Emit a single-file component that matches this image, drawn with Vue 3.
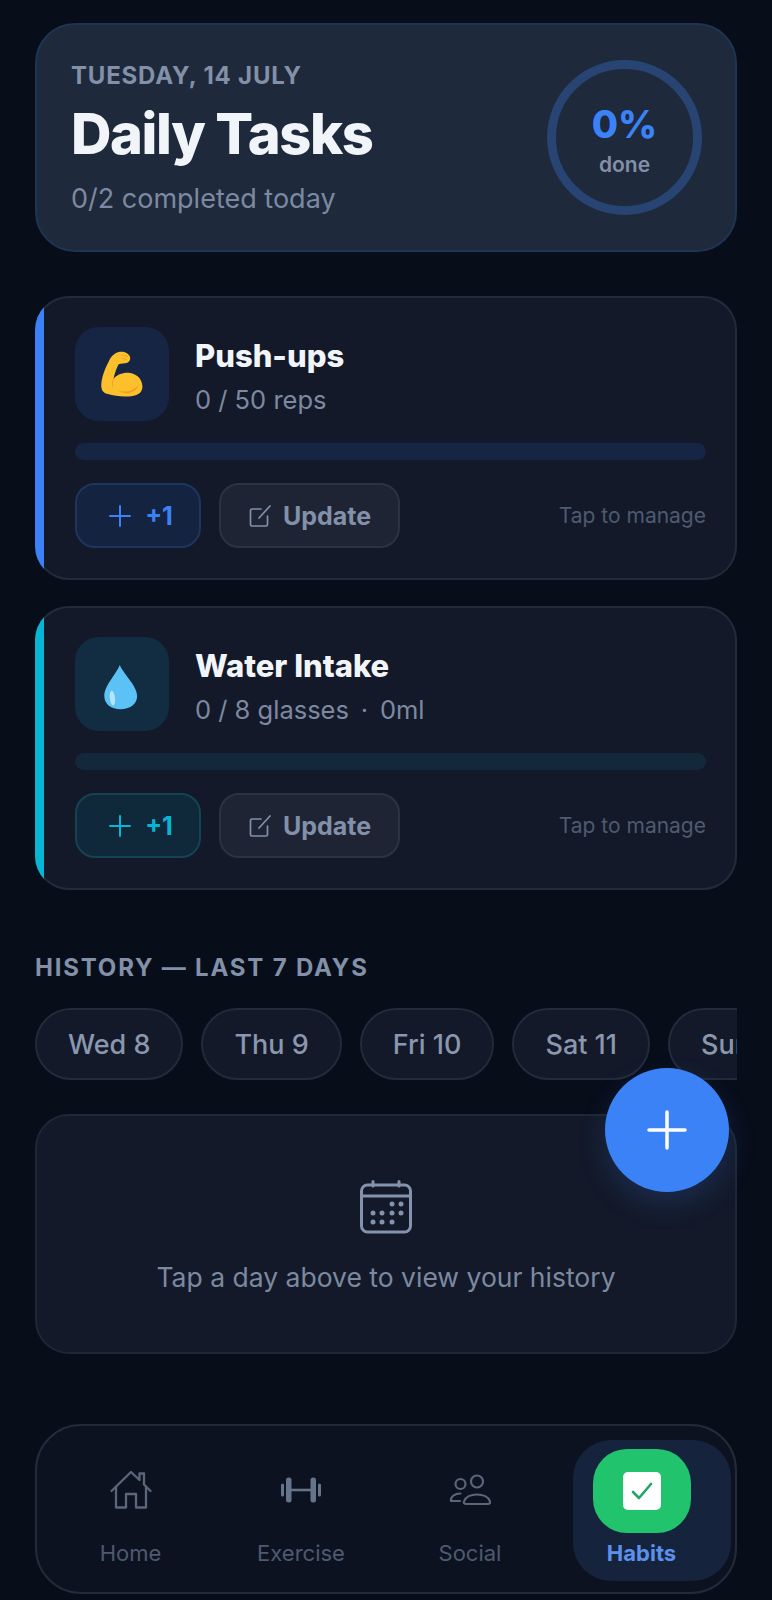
<template>
  <div class="page">
    <section class="summary">
      <div>
        <div class="date">TUESDAY, 14 JULY</div>
        <h1>Daily Tasks</h1>
        <div class="summary-sub">0/2 completed today</div>
      </div>
      <div class="ring">
        <span class="ring-pct">0%</span>
        <span class="ring-done">done</span>
      </div>
    </section>

    <section v-for="task in tasks" :key="task.id" class="task" :class="task.id">
      <div class="task-top">
        <div class="task-icon">
          <svg v-if="task.id === 'pushups'" width="59" height="65" viewBox="0 0 168 186">
            <path d="M25 136C19 118 30 82 45 55C52 40 63 30 76 28C88 26 101 31 105 41C108 50 104 58 96 60C90 62 80 61 73 64C67 74 62 90 58 106C68 93 84 87 102 88C124 90 141 106 141 128C141 147 124 155 100 156C80 157 58 154 42 149C34 147 28 143 25 136z" fill="#fcc02c"/>
            <path d="M70 138C88 146 116 142 128 124C131 118 132 112 130 106C134 124 124 142 104 146C92 148 80 144 70 138z" fill="#f0a020"/>
            <path d="M58 106C55 114 54 122 56 128" fill="none" stroke="#f0a020" stroke-width="2.500" stroke-linecap="round"/>
            <path d="M84 37L98 42M84 47L95 50" fill="none" stroke="#f0a020" stroke-width="2.500" stroke-linecap="round"/>
          </svg>
          <svg v-else width="62" height="69" viewBox="0 0 168 186">
            <path d="M78 40C86 62 125 96 125 124C125 146 105 160 80 160C55 160 36 146 36 124C36 96 70 62 78 40z" fill="#5cc1f5"/>
            <ellipse cx="58" cy="130" rx="7" ry="20" fill="#b5e4fb" transform="rotate(-6 58 130)"/>
          </svg>
        </div>
        <div class="task-text">
          <div class="task-name">{{ task.name }}</div>
          <div class="task-sub">{{ task.sub }}</div>
        </div>
      </div>
      <div class="track"></div>
      <div class="task-actions">
        <button class="btn-add">
          <svg width="26" height="26" viewBox="0 0 26 26" fill="none" stroke="currentColor" stroke-width="2" stroke-linecap="round">
            <path d="M13 3v20M3 13h20"/>
          </svg>
          <span>+1</span>
        </button>
        <button class="btn-update">
          <svg width="24" height="24" viewBox="0 0 24 24" fill="none" stroke="currentColor" stroke-width="1.700" stroke-linecap="round" stroke-linejoin="round">
            <path d="M13 5H4a1.500 1.500 0 0 0-1.500 1.500v14A1.500 1.500 0 0 0 4 22h14a1.500 1.500 0 0 0 1.500-1.500V12"/>
            <path d="M11 14L22 2"/>
          </svg>
          <span>Update</span>
        </button>
        <span class="manage">Tap to manage</span>
      </div>
    </section>

    <h2 class="history-title">HISTORY — LAST 7 DAYS</h2>
    <div class="days">
      <button v-for="day in days" :key="day" class="day">{{ day }}</button>
    </div>

    <section class="history-empty">
      <svg width="54" height="54" viewBox="0 0 54 54" fill="none" stroke="#8492ad" stroke-width="3" stroke-linecap="round">
        <rect x="2.500" y="5" width="49" height="47" rx="6"/>
        <path d="M2.500 16h49M14 1.500V6M40 1.500V6"/>
        <g fill="#8492ad" stroke="none">
          <circle cx="33" cy="24" r="2.500"/><circle cx="42" cy="24" r="2.500"/>
          <circle cx="14" cy="33" r="2.500"/><circle cx="23" cy="33" r="2.500"/><circle cx="33" cy="33" r="2.500"/><circle cx="42" cy="33" r="2.500"/>
          <circle cx="14" cy="42" r="2.500"/><circle cx="23" cy="42" r="2.500"/><circle cx="33" cy="42" r="2.500"/>
        </g>
      </svg>
      <p>Tap a day above to view your history</p>
    </section>

    <button class="fab">
      <svg width="40" height="40" viewBox="0 0 40 40" fill="none" stroke="#fff" stroke-width="3.500" stroke-linecap="round">
        <path d="M20 2v36M2 20h36"/>
      </svg>
    </button>

    <nav class="nav">
      <div class="nav-item">
        <svg width="42" height="38" viewBox="0 0 42 38" fill="none" stroke="#5b6679" stroke-width="2.300" stroke-linejoin="round" stroke-linecap="round">
          <path d="M1.500 20L21 1l8.500 8V2.500h4.500v11L40.500 20"/>
          <path d="M6 16v20.500h10V23h10v13.500h10V16"/>
        </svg>
        <span>Home</span>
      </div>
      <div class="nav-item">
        <svg width="42" height="38" viewBox="0 0 42 38" fill="#64748b">
          <rect x="1" y="12.500" width="3" height="13" rx="1.500"/>
          <rect x="6" y="6.500" width="5.500" height="25" rx="2.500"/>
          <rect x="30.500" y="6.500" width="5.500" height="25" rx="2.500"/>
          <rect x="38" y="12.500" width="3" height="13" rx="1.500"/>
          <rect x="11" y="17.700" width="20" height="2.600"/>
        </svg>
        <span>Exercise</span>
      </div>
      <div class="nav-item">
        <svg width="42" height="38" viewBox="0 0 42 38" fill="none" stroke="#5b6679" stroke-width="2.200" stroke-linecap="round">
          <circle cx="11.500" cy="13" r="5"/>
          <circle cx="28" cy="10.500" r="6"/>
          <path d="M2 30h9M2 30c-.8-4 3.500-7.500 9.500-7.500"/>
          <path d="M17 33c-1.500 0-2.500-1-2-2.500c1.500-4.500 7-7 13-7s11.500 2.500 13 7c.4 1.500-.5 2.500-2 2.500z"/>
        </svg>
        <span>Social</span>
      </div>
      <div class="nav-item active">
        <div class="nav-badge">
          <div class="nav-check">
            <svg width="22" height="18" viewBox="0 0 22 18" fill="none" stroke="#22a565" stroke-width="2.600" stroke-linecap="round" stroke-linejoin="round">
              <path d="M2 10l6 6L20 2"/>
            </svg>
          </div>
        </div>
        <span>Habits</span>
      </div>
    </nav>
  </div>
</template>

<script setup>
const tasks = [
  { id: 'pushups', name: 'Push-ups', sub: '0 / 50 reps' },
  { id: 'water', name: 'Water Intake', sub: '0 / 8 glasses\u2009 ·\u2009 0ml' }
]

const days = ['Wed 8', 'Thu 9', 'Fri 10', 'Sat 11', 'Sun 12']
</script>

<style>
html, body {
  margin: 0;
  background: #080d1a;
}
</style>

<style scoped>
.page {
  position: relative;
  box-sizing: border-box;
  height: 1600px;
  padding: 23px 35px 0;
  overflow: hidden;
  background: #080d1a;
  font-family: Inter, "Liberation Sans", sans-serif;
}

.summary {
  box-sizing: border-box;
  height: 229px;
  display: flex;
  justify-content: space-between;
  align-items: center;
  padding: 0 35px 0 34px;
  background: #1e293b;
  border: 2px solid #1e3454;
  border-radius: 40px;
}

.date {
  font-size: 24px;
  line-height: 29px;
  font-weight: 700;
  letter-spacing: 0.8px;
  color: #8290a8;
}

h1 {
  margin: 10px 0 14px;
  font-size: 56px;
  line-height: 68px;
  font-weight: 800;
  letter-spacing: -1.4px;
  color: #f1f5f9;
}

.summary-sub {
  font-size: 27px;
  line-height: 33px;
  color: #7c89a1;
}

.ring {
  box-sizing: border-box;
  width: 155px;
  height: 155px;
  margin-right: -2px;
  padding-top: 4px;
  display: flex;
  flex-direction: column;
  align-items: center;
  justify-content: center;
  border: 9px solid #274472;
  border-radius: 50%;
}

.ring-pct {
  font-size: 38px;
  line-height: 44px;
  font-weight: 800;
  color: #3b82f6;
}

.ring-done {
  margin-top: 6px;
  font-size: 21px;
  font-weight: 600;
  color: #8290a8;
}

.task {
  position: relative;
  box-sizing: border-box;
  height: 284px;
  margin-top: 26px;
  padding: 31px 31px 0 40px;
  overflow: hidden;
  background: #131929;
  box-shadow: inset 0 0 0 2px #232a3a;
  border-radius: 34px;
}

.task::before {
  content: "";
  position: absolute;
  left: 0;
  top: 0;
  bottom: 0;
  width: 9px;
  background: #3b82f6;
}

.summary + .task {
  margin-top: 44px;
}

.task.water::before {
  background: #06b6d4;
}

.task-top {
  display: flex;
  align-items: center;
  gap: 26px;
}

.task-icon {
  flex: none;
  width: 94px;
  height: 94px;
  display: flex;
  align-items: center;
  justify-content: center;
  border-radius: 24px;
  background: #172544;
}

.water .task-icon {
  background: #122c42;
}

.task-text {
  padding-top: 4px;
}

.task-name {
  font-size: 31px;
  line-height: 38px;
  font-weight: 800;
  color: #f1f5f9;
}

.task-sub {
  margin-top: 9px;
  font-size: 25.5px;
  line-height: 32px;
  color: #7c89a1;
  white-space: pre;
}

.track {
  height: 17px;
  margin-top: 22px;
  border-radius: 9px;
  background: #172544;
}

.water .track {
  background: #13283a;
}

.task-actions {
  display: flex;
  align-items: center;
  margin-top: 23px;
}

button {
  font-family: inherit;
  cursor: pointer;
}

.btn-add,
.btn-update {
  box-sizing: border-box;
  height: 65px;
  display: flex;
  align-items: center;
  justify-content: center;
  border-radius: 20px;
  font-size: 25px;
  font-weight: 700;
}

.btn-add {
  width: 126px;
  gap: 12px;
  padding: 0 0 0 4px;
  color: #3b82f6;
  background: #14233f;
  border: 2px solid #1d3560;
}

.water .btn-add {
  color: #06b6d4;
  background: #10293a;
  border-color: #134355;
}

.btn-update {
  width: 181px;
  margin-left: 18px;
  gap: 11px;
  color: #8290a8;
  background: #1e2433;
  border: 2px solid #2b3242;
}

.manage {
  margin-left: auto;
  font-size: 21px;
  color: #4e5a6f;
}

.history-title {
  margin: 63px 0 0;
  font-size: 24px;
  line-height: 30px;
  font-weight: 700;
  letter-spacing: 1.8px;
  color: #8290a8;
}

.days {
  display: flex;
  gap: 18px;
  margin-top: 25px;
  overflow: hidden;
}

.day {
  flex: none;
  height: 72px;
  padding: 0 31px;
  background: #131929;
  border: 2px solid #232a3a;
  border-radius: 36px;
  font-size: 27px;
  font-weight: 500;
  color: #8a97ae;
}

.history-empty {
  box-sizing: border-box;
  height: 240px;
  margin-top: 34px;
  display: flex;
  flex-direction: column;
  align-items: center;
  padding-top: 64px;
  background: #131929;
  border: 2px solid #1f2636;
  border-radius: 34px;
}

.history-empty p {
  margin: 25px 0 0;
  font-size: 26.5px;
  line-height: 36px;
  color: #7c89a1;
}

.fab {
  position: absolute;
  left: 605px;
  top: 1068px;
  width: 124px;
  height: 124px;
  display: flex;
  align-items: center;
  justify-content: center;
  padding: 0;
  border: none;
  border-radius: 50%;
  background: #3b82f6;
  box-shadow: 0 12px 28px rgba(59, 130, 246, 0.18);
}

.nav {
  box-sizing: border-box;
  height: 170px;
  margin-top: 70px;
  display: grid;
  grid-template-columns: 171px 170px 168px 177px;
  padding: 14px 4px 11px 8px;
  background: #0c1220;
  border: 2px solid #232a3a;
  border-radius: 46px;
}

.nav-item {
  display: flex;
  flex-direction: column;
  align-items: center;
  padding-top: 31px;
  font-size: 22px;
  line-height: 26px;
  color: #4e5a6f;
}

.nav-item svg {
  display: block;
}

.nav-item > svg {
  margin-bottom: 31px;
}

.nav-item.active {
  margin-left: 19px;
  padding: 9px 21px 0 0;
  background: #16233c;
  border-radius: 38px;
  color: #5b91ec;
  font-weight: 700;
}

.nav-badge {
  flex: none;
  width: 98px;
  height: 84px;
  margin-bottom: 7px;
  display: flex;
  align-items: center;
  justify-content: center;
  border-radius: 34px;
  background: #21c36c;
}

.nav-check {
  width: 38px;
  height: 38px;
  display: flex;
  align-items: center;
  justify-content: center;
  border-radius: 5px;
  background: #fff;
}
</style>
